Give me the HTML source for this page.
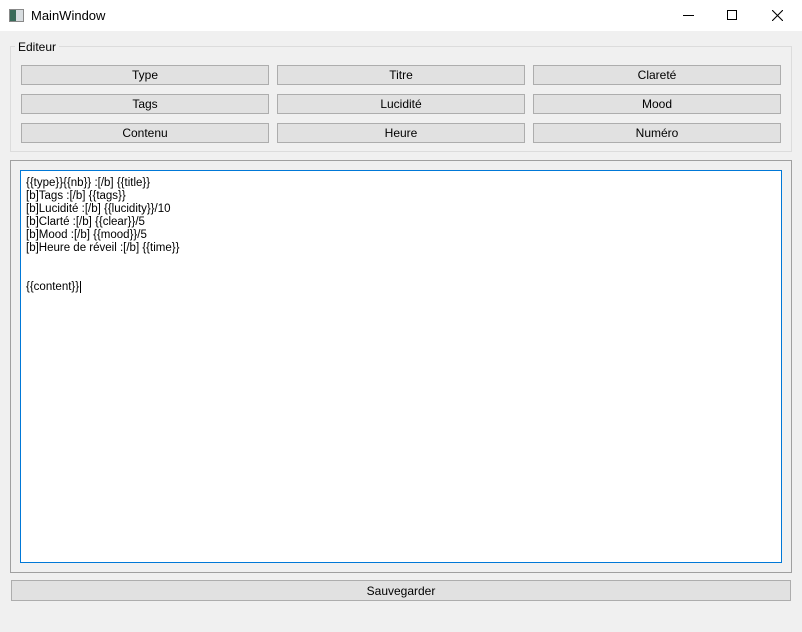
<!DOCTYPE html>
<html><head><style>
body{margin:0;width:802px;height:632px;background:#f0f0f0;font-family:"Liberation Sans",sans-serif;font-size:12px;position:relative;overflow:hidden;color:#000}
.a{position:absolute;box-sizing:border-box}
.btn{position:absolute;box-sizing:border-box;background:#e1e1e1;border:1px solid #adadad;text-align:center;line-height:19px;font-size:12px}
.tb{left:0;top:0;width:802px;height:31px;background:#fff}
</style></head><body>
<div class="a tb"></div>
<div class="a" style="left:9px;top:9px;width:15px;height:13px;border:1px solid #888;background:linear-gradient(90deg,#3a6b5a 0 45%,#d8dde0 45%)"></div>
<div class="a" style="left:31px;top:8px;font-size:13px">MainWindow</div>
<div class="a" style="left:683px;top:15px;width:11px;height:1px;background:#000"></div>
<div class="a" style="left:727px;top:10px;width:10px;height:10px;border:1px solid #000"></div>
<svg class="a" style="left:772px;top:10px" width="11" height="11"><path d="M0 0L11 11M11 0L0 11" stroke="#000" stroke-width="1.1"/></svg>
<div class="a" style="left:10px;top:46px;width:782px;height:106px;border:1px solid #dcdcdc"></div>
<div class="a" style="left:15px;top:40px;background:#f0f0f0;padding:0 3px">Editeur</div>
<div class="btn" style="left:21px;top:65px;width:248px;height:20px">Type</div>
<div class="btn" style="left:277px;top:65px;width:248px;height:20px">Titre</div>
<div class="btn" style="left:533px;top:65px;width:248px;height:20px">Clareté</div>
<div class="btn" style="left:21px;top:94px;width:248px;height:20px">Tags</div>
<div class="btn" style="left:277px;top:94px;width:248px;height:20px">Lucidité</div>
<div class="btn" style="left:533px;top:94px;width:248px;height:20px">Mood</div>
<div class="btn" style="left:21px;top:123px;width:248px;height:20px">Contenu</div>
<div class="btn" style="left:277px;top:123px;width:248px;height:20px">Heure</div>
<div class="btn" style="left:533px;top:123px;width:248px;height:20px">Numéro</div>
<div class="a" style="left:10px;top:160px;width:782px;height:413px;border:1px solid #a0a0a0"></div>
<div class="a" style="left:20px;top:170px;width:762px;height:393px;border:1px solid #0078d7;background:#fff;padding:6px 0 0 5px;line-height:13px;font-size:11.5px">{{type}}{{nb}} :[/b] {{title}}<br>[b]Tags :[/b] {{tags}}<br>[b]Lucidité :[/b] {{lucidity}}/10<br>[b]Clarté :[/b] {{clear}}/5<br>[b]Mood :[/b] {{mood}}/5<br>[b]Heure de réveil :[/b] {{time}}<br><br><br>{{content}}<span style="border-left:1px solid #000;margin-left:1px"></span></div>
<div class="btn" style="left:11px;top:580px;width:780px;height:21px;line-height:20px">Sauvegarder</div>
</body></html>
